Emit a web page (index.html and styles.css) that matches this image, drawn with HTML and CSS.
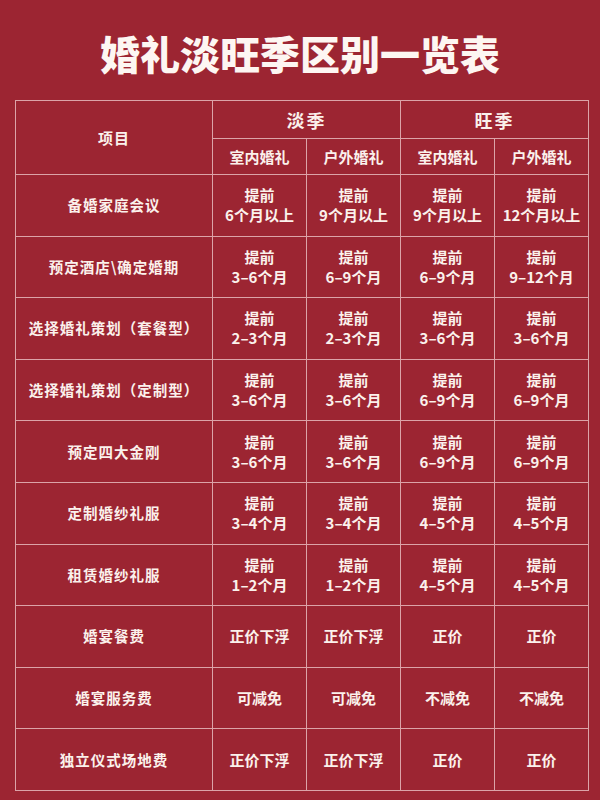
FILE: index.html
```html
<!DOCTYPE html>
<html lang="zh-CN">
<head>
<meta charset="utf-8">
<title>婚礼淡旺季区别一览表</title>
<link rel="stylesheet" href="styles.css">
</head>
<body>
<div class="page">
  <h1 class="title">婚礼淡旺季区别一览表</h1>
  <table class="grid">
    <colgroup>
      <col class="c-item"><col class="c-val"><col class="c-val"><col class="c-val"><col class="c-val">
    </colgroup>
    <thead>
      <tr class="h1">
        <th rowspan="2" class="item-h">项目</th>
        <th colspan="2" class="season">淡季</th>
        <th colspan="2" class="season">旺季</th>
      </tr>
      <tr class="h2">
        <th>室内婚礼</th><th>户外婚礼</th><th>室内婚礼</th><th>户外婚礼</th>
      </tr>
    </thead>
    <tbody>
      <tr><td class="item">备婚家庭会议</td><td>提前<br>6个月以上</td><td>提前<br>9个月以上</td><td>提前<br>9个月以上</td><td>提前<br>12个月以上</td></tr>
      <tr><td class="item">预定酒店\确定婚期</td><td>提前<br>3–6个月</td><td>提前<br>6–9个月</td><td>提前<br>6–9个月</td><td>提前<br>9–12个月</td></tr>
      <tr><td class="item">选择婚礼策划（套餐型）</td><td>提前<br>2–3个月</td><td>提前<br>2–3个月</td><td>提前<br>3–6个月</td><td>提前<br>3–6个月</td></tr>
      <tr><td class="item">选择婚礼策划（定制型）</td><td>提前<br>3–6个月</td><td>提前<br>3–6个月</td><td>提前<br>6–9个月</td><td>提前<br>6–9个月</td></tr>
      <tr><td class="item">预定四大金刚</td><td>提前<br>3–6个月</td><td>提前<br>3–6个月</td><td>提前<br>6–9个月</td><td>提前<br>6–9个月</td></tr>
      <tr><td class="item">定制婚纱礼服</td><td>提前<br>3–4个月</td><td>提前<br>3–4个月</td><td>提前<br>4–5个月</td><td>提前<br>4–5个月</td></tr>
      <tr><td class="item">租赁婚纱礼服</td><td>提前<br>1–2个月</td><td>提前<br>1–2个月</td><td>提前<br>4–5个月</td><td>提前<br>4–5个月</td></tr>
      <tr><td class="item">婚宴餐费</td><td>正价下浮</td><td>正价下浮</td><td>正价</td><td>正价</td></tr>
      <tr><td class="item">婚宴服务费</td><td>可减免</td><td>可减免</td><td>不减免</td><td>不减免</td></tr>
      <tr><td class="item">独立仪式场地费</td><td>正价下浮</td><td>正价下浮</td><td>正价</td><td>正价</td></tr>
    </tbody>
  </table>
</div>
</body>
</html>
```
FILE: styles.css
```css
html, body {
  margin: 0;
  padding: 0;
  background: #9c2532;
}
.page {
  width: 600px;
  height: 800px;
  background: #9c2532;
  color: #fbf1ec;
  font-family: "Noto Sans CJK SC", "Noto Sans", sans-serif;
  overflow: hidden;
}
.title {
  margin: 0;
  height: 100px;
  display: flex;
  align-items: center;
  justify-content: center;
  font-size: 40px;
  font-weight: 900;
  letter-spacing: 0;
  padding-top: 5px;
  box-sizing: border-box;
  color: #fdf6f2;
}
.grid {
  margin-left: 15px;
  width: 572px;
  border-collapse: collapse;
  table-layout: fixed;
}
.c-item { width: 197px; }
.c-val { width: 94px; }
.grid th, .grid td {
  border: 1px solid #dca3a8;
  text-align: center;
  vertical-align: middle;
  padding: 0;
  font-weight: 700;
  font-size: 15px;
  line-height: 20px;
}
.grid .h1 th { height: 37px; }
.grid .h2 th { height: 35px; font-size: 15px; }
.grid .season { font-size: 18px; letter-spacing: 2px; }
.grid .item-h { font-size: 15px; letter-spacing: 1px; }
.grid tbody td { height: 60.6px; }
.grid .item { font-size: 14.5px; letter-spacing: 1px; }
```
